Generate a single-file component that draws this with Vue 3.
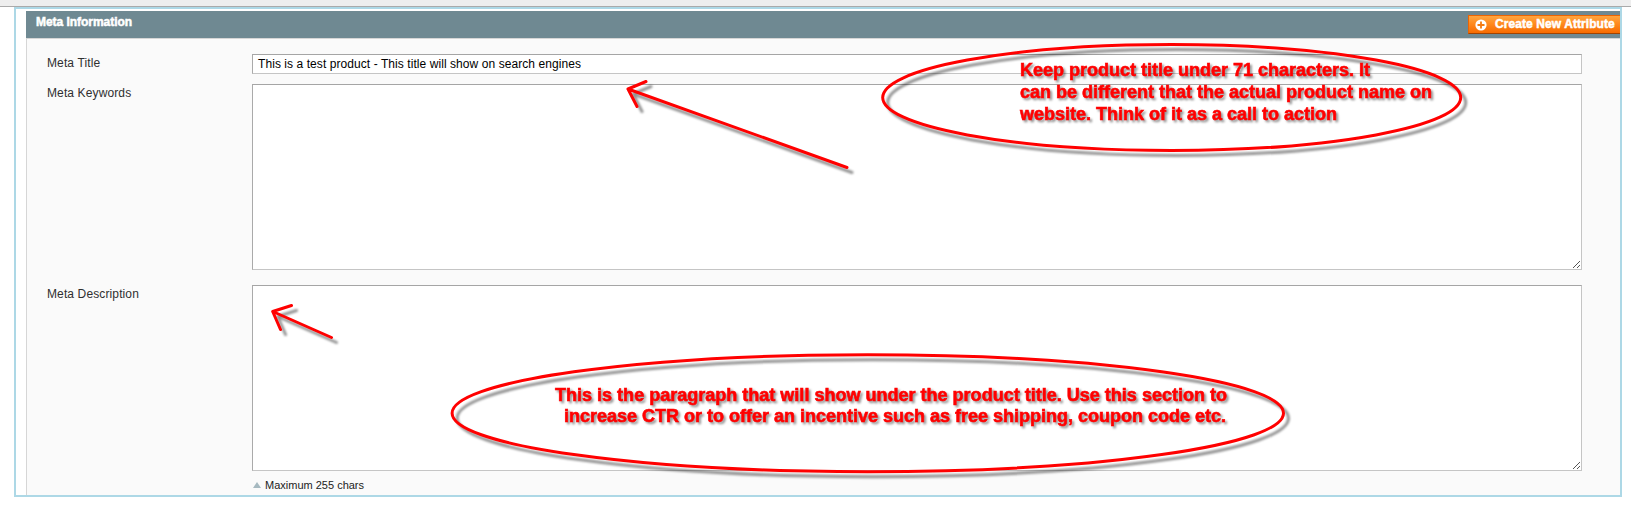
<script setup>
const notes = [
  { x: 1020, y: 76, w: 350, text: 'Keep product title under 71 characters. It' },
  { x: 1020, y: 98, w: 412, text: 'can be different that the actual product name on' },
  { x: 1020, y: 120, w: 317, text: 'website. Think of it as a call to action' },
  { x: 555, y: 401, w: 672, text: 'This is the paragraph that will show under the product title. Use this section to' },
  { x: 564, y: 422, w: 662, text: 'increase CTR or to offer an incentive such as free shipping, coupon code etc.' },
]
const ellipses = [
  { cx: 1171.7, cy: 97.5, rx: 289, ry: 52.9 },
  { cx: 867.8, cy: 413.2, rx: 415.7, ry: 58.5 },
]
const arrows = [
  'M847 167.5L628 89M646 81.5L628 89L637 106.5',
  'M331.5 337.5L272.7 311.5M291.5 305.5L272.7 311.5L280.5 329.5',
]
</script>

<template>
  <div class="page">
    <div class="strip"></div>
    <section class="frame">
      <header class="head">
        <h4>Meta Information</h4>
        <button class="create" type="button">
          <svg width="12" height="12" viewBox="0 0 12 12">
            <circle cx="6" cy="6" r="5.6" fill="#fff" />
            <path d="M6 2.5V9.5M2.5 6H9.5" stroke="#f47b12" stroke-width="1.8" />
          </svg>
          <span>Create New Attribute</span>
        </button>
      </header>
      <div class="body">
        <div class="row title-row">
          <label>Meta Title</label>
          <div class="field input"><span>This is a test product - This title will show on search engines</span></div>
        </div>
        <div class="row keywords-row">
          <label>Meta Keywords</label>
          <div class="field area">
            <svg class="grip" width="8" height="8" viewBox="0 0 8 8" shape-rendering="crispEdges">
              <path d="M0 7h1M1 6h1M2 5h1M3 4h1M4 3h1M5 2h1M6 1h1M4 7h1M5 6h1M6 5h1" transform="translate(0 .5)" stroke="#555" />
            </svg>
          </div>
        </div>
        <div class="row">
          <label>Meta Description</label>
          <div class="field area">
            <svg class="grip" width="8" height="8" viewBox="0 0 8 8" shape-rendering="crispEdges">
              <path d="M0 7h1M1 6h1M2 5h1M3 4h1M4 3h1M5 2h1M6 1h1M4 7h1M5 6h1M6 5h1" transform="translate(0 .5)" stroke="#555" />
            </svg>
          </div>
        </div>
        <p class="hint"><i></i><span>Maximum 255 chars</span></p>
      </div>
    </section>
    <svg class="marks" width="1631" height="509" viewBox="0 0 1631 509">
      <g class="shapes">
        <ellipse v-for="e in ellipses" :key="e.cx" v-bind="e" />
        <path v-for="d in arrows" :key="d" :d="d" />
      </g>
      <g class="notes">
        <text v-for="n in notes" :key="n.y" :x="n.x" :y="n.y" :textLength="n.w">{{ n.text }}</text>
      </g>
    </svg>
  </div>
</template>

<style>
body { background: #fff; }
</style>

<style scoped>
.page {
  position: relative;
  width: 1631px;
  height: 509px;
  overflow: hidden;
  font: 12px/16px "Liberation Sans", Arial, sans-serif;
  color: #2f2f2f;
}
.page * { box-sizing: border-box; }
.strip { height: 7px; background: #eee; border-bottom: 1px solid #aaa; }
.frame {
  width: 1608px;
  height: 490px;
  margin-left: 14px;
  padding: 2px 0 0 10px;
  border: 2px solid #add8e6;
  display: flex;
  flex-direction: column;
}
.head {
  height: 27px;
  flex: none;
  display: flex;
  justify-content: space-between;
  align-items: flex-start;
  padding-left: 10px;
  background: #6f8992;
}
h4 { margin: 3px 0 0; font-size: 12px; line-height: 16px; color: #fff; letter-spacing: -.04px; -webkit-text-stroke: .5px #fff; }
.create {
  width: 152px;
  height: 19px;
  margin-top: 4px;
  padding: 0 0 0 6px;
  display: flex;
  align-items: center;
  gap: 8px;
  border: 1px solid #ed6502;
  border-bottom-color: #a04300;
  border-right: 0;
  background: linear-gradient(#ffa53f, #ff8a1f 45%, #f76b00);
  color: #fff;
  font: bold 12px/16px "Liberation Sans", Arial, sans-serif;
  white-space: nowrap;
  -webkit-text-stroke: .5px #fff;
}
.create svg { flex: none; }
.create span { letter-spacing: .08px; margin-top: -1px; }
.body {
  flex: 1;
  padding: 15px 38px 0 20px;
  border-top: 1px solid #d6d6d6;
  border-left: 1px solid #d6d6d6;
  background: #fafafa;
}
.row { display: flex; margin-bottom: 15px; }
.title-row { margin-bottom: 10px; }
label { width: 205px; flex: none; padding-top: 1px; letter-spacing: .12px; }
.field { flex: 1; background: #fff; border: 1px solid #c5c5c5; border-top-color: #a5a5a5; border-left-color: #aaa; color: #000; }
.input { height: 20px; padding: 1px 5px; letter-spacing: .07px; }
.area { height: 186px; display: flex; justify-content: flex-end; align-items: flex-end; padding: 1px 0; }
.hint { display: flex; align-items: center; gap: 4px; margin: -9px 0 0 206px; font-size: 11px; color: #222; }
.hint i { border: solid transparent; border-width: 0 4px 6px; border-bottom-color: #a6b9c0; }
.marks { position: absolute; left: 0; top: 0; }
.shapes { fill: none; stroke: #f00; stroke-width: 3; stroke-linecap: round; stroke-linejoin: round; filter: drop-shadow(5px 5px 1.3px rgba(0, 0, 0, .42)); }
.notes { fill: #f00; stroke: #f00; stroke-width: .6; font: bold 18px "Liberation Sans", Arial, sans-serif; filter: drop-shadow(2px 2px 1.2px rgba(0, 0, 0, .42)); }
</style>
